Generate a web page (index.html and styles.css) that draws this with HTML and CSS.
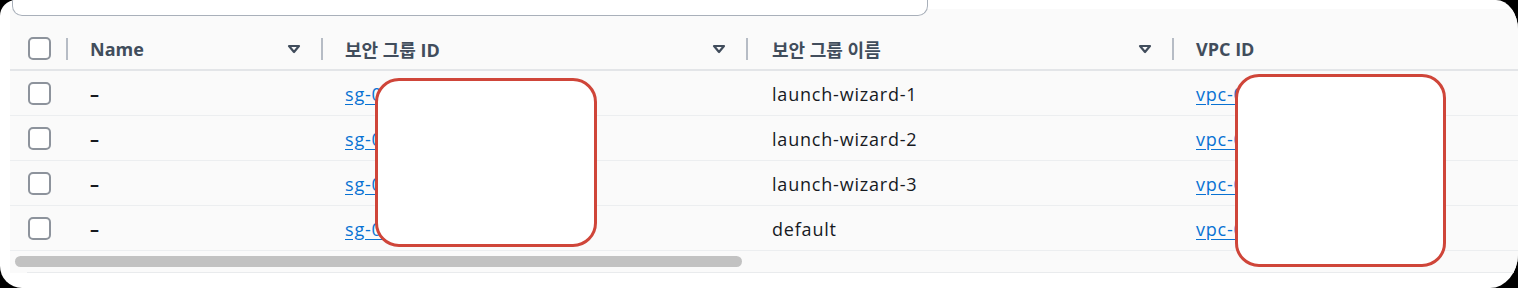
FILE: index.html
```html
<!DOCTYPE html>
<html lang="ko">
<head>
<meta charset="utf-8">
<title>보안 그룹</title>
<link rel="stylesheet" href="styles.css">
</head>
<body>
<div class="frame">
  <div class="panel">
    <div class="filter-edge"></div>
    <div class="table">
      <div class="row head">
        <div class="cell check"><span class="box"></span></div>
        <div class="cell hcell"><span class="label">Name</span><svg class="sort" viewBox="0 0 14 10" width="14" height="10"><polygon points="2,2 12,2 7,8" /></svg></div>
        <div class="cell hcell"><span class="label">보안 그룹 ID</span><svg class="sort" viewBox="0 0 14 10" width="14" height="10"><polygon points="2,2 12,2 7,8" /></svg></div>
        <div class="cell hcell wide"><span class="label">보안 그룹 이름</span><svg class="sort" viewBox="0 0 14 10" width="14" height="10"><polygon points="2,2 12,2 7,8" /></svg></div>
        <div class="cell hcell last"><span class="label">VPC ID</span></div>
      </div>
      <div class="row">
        <div class="cell check"><span class="box"></span></div>
        <div class="cell"><span class="dash">–</span></div>
        <div class="cell"><a class="link" href="#">sg-0</a></div>
        <div class="cell wide">launch-wizard-1</div>
        <div class="cell"><a class="link" href="#">vpc-0</a></div>
      </div>
      <div class="row">
        <div class="cell check"><span class="box"></span></div>
        <div class="cell"><span class="dash">–</span></div>
        <div class="cell"><a class="link" href="#">sg-0</a></div>
        <div class="cell wide">launch-wizard-2</div>
        <div class="cell"><a class="link" href="#">vpc-0</a></div>
      </div>
      <div class="row">
        <div class="cell check"><span class="box"></span></div>
        <div class="cell"><span class="dash">–</span></div>
        <div class="cell"><a class="link" href="#">sg-0</a></div>
        <div class="cell wide">launch-wizard-3</div>
        <div class="cell"><a class="link" href="#">vpc-0</a></div>
      </div>
      <div class="row">
        <div class="cell check"><span class="box"></span></div>
        <div class="cell"><span class="dash">–</span></div>
        <div class="cell"><a class="link" href="#">sg-0</a></div>
        <div class="cell wide">default</div>
        <div class="cell"><a class="link" href="#">vpc-0</a></div>
      </div>
      <div class="scroll-track"><div class="scroll-thumb"></div></div>
    </div>
    <div class="redact redact-sg"></div>
    <div class="redact redact-vpc"></div>
  </div>
</div>
</body>
</html>
```

FILE: styles.css
```css
html, body {
  margin: 0;
  padding: 0;
  background: #000;
}

.frame {
  width: 1518px;
  height: 288px;
  overflow: hidden;
}

.panel {
  position: relative;
  width: 1518px;
  height: 288px;
  background: #fff;
  border-radius: 16px 22px 28px 22px / 16px 30px 34px 22px;
  overflow: hidden;
  font-family: "Open Sans", "Noto Sans CJK KR", sans-serif;
  font-size: 18px;
  letter-spacing: 0.8px;
  color: #16191f;
}

.filter-edge {
  position: absolute;
  left: 12px;
  top: 0;
  width: 914px;
  height: 15px;
  border: 1.5px solid #a9b0ba;
  border-top: none;
  border-radius: 0 0 10px 10px;
  background: #fff;
  z-index: 1;
}

.table {
  margin: 9px 0 0 10px;
  padding-top: 19px;
  background: #fafafa;
  display: flex;
  flex-direction: column;
}

.row {
  display: grid;
  grid-template-columns: 56px 255px 425px 426px 1fr;
  height: 45px;
  flex-shrink: 0;
  border-bottom: 1.5px solid #eceef0;
  box-sizing: border-box;
  align-items: center;
}

.row.head {
  height: 43px;
  border-bottom: 2px solid #e3e5e8;
  font-weight: 700;
  color: #414d5c;
  letter-spacing: 0;
}

.row:not(.head) .cell {
  padding-top: 1px;
}

.cell {
  display: flex;
  align-items: center;
  padding-left: 24px;
  white-space: nowrap;
}

.cell.wide {
  padding-left: 26px;
}

.cell.check {
  padding-left: 18px;
}

.dash {
  font-weight: 700;
}

.box {
  display: block;
  width: 19px;
  height: 19px;
  border: 2px solid #8d939c;
  border-radius: 5px;
  background: #fff;
}

.hcell {
  position: relative;
  height: 22px;
}

.hcell::before {
  content: "";
  position: absolute;
  left: 0;
  top: 0;
  width: 2px;
  height: 22px;
  background: #b6bcc5;
}

.hcell .label {
  flex: 1;
}

.sort {
  margin-right: 20px;
  fill: none;
  stroke: #414d5c;
  stroke-width: 2.2;
  stroke-linejoin: round;
}

.link {
  color: #0972d3;
  text-decoration: underline;
  text-underline-offset: 3px;
}

.scroll-track {
  height: 21px;
  flex-shrink: 0;
  border-bottom: 1.5px solid #e9ebed;
  margin-left: 17px;
  position: relative;
}

.scroll-thumb {
  position: absolute;
  left: -12px;
  top: 5px;
  width: 727px;
  height: 11px;
  border-radius: 6px;
  background: #c2c2c2;
}

.redact {
  position: absolute;
  background: #fff;
  border: 3px solid #cf4539;
  border-radius: 24px;
  box-sizing: border-box;
  z-index: 2;
}

.redact-sg {
  left: 375px;
  top: 78px;
  width: 222px;
  height: 169px;
}

.redact-vpc {
  left: 1235px;
  top: 74px;
  width: 211px;
  height: 193px;
}
```
